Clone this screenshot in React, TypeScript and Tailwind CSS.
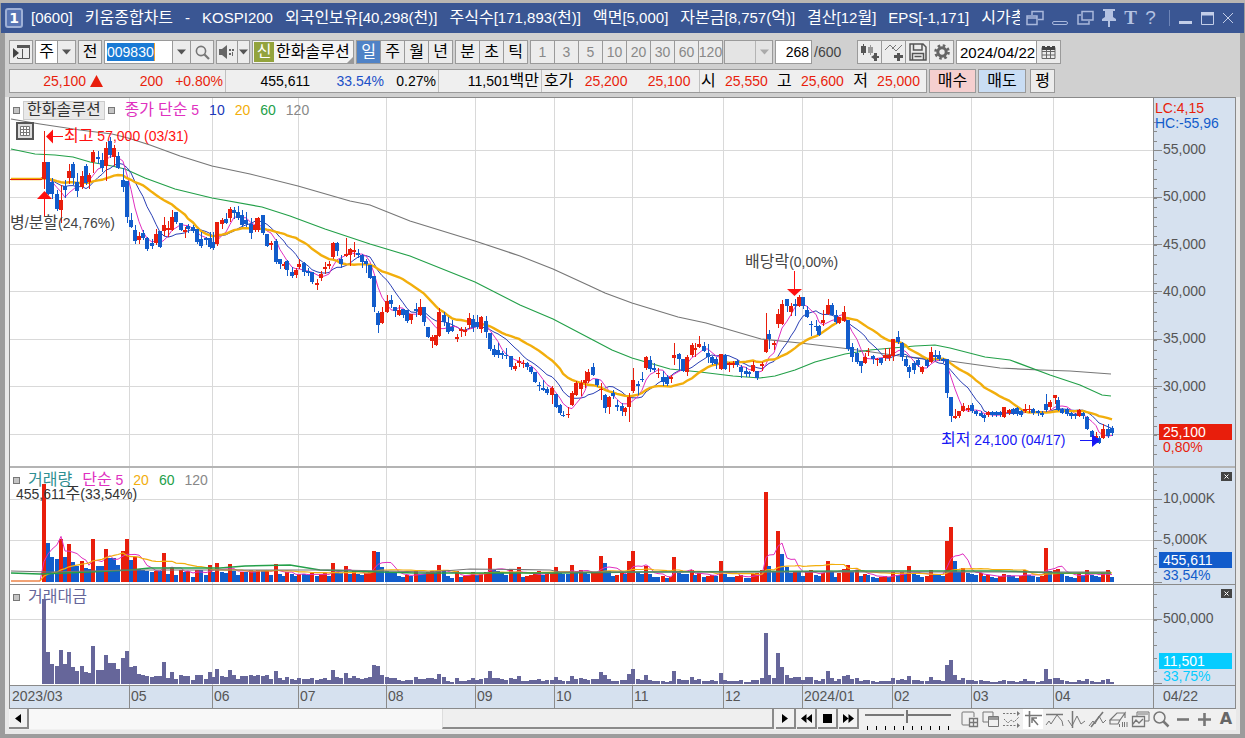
import React from "react";

type Candle = [color: 0 | 1, x: number, high: number, top: number, bottom: number, low: number, volume: number];

const RED = "#e81e0c";
const BLUE = "#125ccb";

/* color (1 = up, 0 = down), x, high, body top, body bottom, low, volume bar height */
const CANDLES: Candle[] = [
  [1, 44, 131, 162, 179, 188, 98], [0, 48, 162, 162, 194, 194, 39], [0, 52, 178, 182, 194, 198, 25], [0, 57, 190, 194, 209, 210, 23],
  [1, 61, 185, 200, 210, 222, 43], [0, 65, 180, 186, 190, 197, 25], [1, 69, 164, 171, 178, 183, 38], [0, 73, 162, 164, 178, 184, 20],
  [0, 77, 173, 182, 191, 196, 16], [1, 82, 171, 176, 187, 188, 21], [0, 86, 164, 166, 183, 184, 14], [1, 89, 173, 175, 182, 188, 13],
  [1, 93, 150, 152, 162, 172, 43], [0, 98, 151, 157, 159, 163, 16], [0, 102, 153, 160, 168, 171, 16], [1, 106, 142, 148, 166, 180, 33],
  [0, 110, 137, 141, 155, 157, 24], [1, 114, 145, 148, 157, 165, 24], [0, 118, 152, 156, 168, 168, 17], [0, 123, 168, 180, 187, 191, 31],
  [0, 127, 181, 181, 217, 222, 43], [0, 131, 213, 220, 227, 227, 22], [0, 135, 225, 230, 241, 243, 25], [1, 139, 232, 236, 240, 243, 13],
  [0, 143, 230, 233, 238, 239, 12], [0, 147, 237, 238, 249, 250, 11], [0, 152, 239, 243, 246, 248, 10], [1, 156, 229, 234, 243, 244, 11],
  [0, 160, 231, 231, 247, 247, 11], [1, 164, 217, 225, 231, 235, 29], [1, 168, 221, 228, 230, 236, 8], [1, 172, 210, 217, 230, 230, 15],
  [0, 176, 212, 212, 222, 223, 7], [0, 181, 223, 223, 230, 230, 12], [1, 185, 227, 230, 232, 237, 10], [0, 188, 224, 226, 229, 232, 11],
  [0, 193, 225, 227, 231, 232, 5], [0, 197, 229, 229, 242, 243, 12], [0, 201, 232, 239, 246, 247, 12], [0, 206, 237, 238, 240, 244, 7],
  [0, 210, 232, 238, 247, 248, 17], [0, 213, 232, 242, 248, 249, 10], [1, 217, 222, 222, 244, 245, 19], [1, 222, 218, 220, 224, 228, 10],
  [0, 226, 213, 219, 223, 223, 9], [1, 230, 207, 209, 218, 221, 18], [0, 234, 207, 210, 213, 218, 11], [0, 238, 206, 212, 218, 219, 7],
  [0, 242, 210, 215, 225, 226, 10], [0, 246, 212, 220, 224, 226, 10], [0, 251, 218, 224, 233, 238, 12], [1, 255, 218, 225, 230, 231, 11],
  [1, 258, 217, 218, 230, 231, 12], [0, 263, 215, 215, 233, 234, 11], [0, 267, 234, 234, 246, 246, 12], [1, 271, 241, 243, 245, 249, 7],
  [0, 276, 239, 241, 262, 263, 18], [0, 280, 259, 259, 264, 268, 8], [1, 284, 262, 264, 266, 268, 6], [0, 287, 260, 261, 270, 275, 10],
  [0, 292, 267, 272, 276, 277, 8], [1, 296, 268, 270, 275, 277, 6], [1, 299, 259, 264, 267, 268, 8], [0, 304, 262, 263, 272, 275, 8],
  [0, 308, 268, 271, 273, 275, 7], [0, 312, 272, 272, 282, 283, 9], [1, 317, 279, 283, 285, 289, 6], [1, 321, 271, 274, 278, 280, 8],
  [1, 325, 262, 267, 269, 273, 9], [1, 329, 261, 264, 266, 268, 6], [1, 333, 242, 243, 257, 258, 19], [0, 337, 242, 243, 251, 255, 10],
  [0, 341, 255, 259, 264, 267, 9], [1, 346, 238, 254, 256, 256, 16], [1, 350, 248, 249, 255, 265, 8], [1, 354, 242, 250, 252, 256, 11],
  [0, 358, 249, 253, 255, 257, 8], [0, 362, 254, 255, 262, 267, 7], [0, 366, 259, 261, 264, 272, 9], [0, 370, 265, 265, 278, 278, 11],
  [0, 374, 276, 276, 307, 311, 31], [0, 378, 311, 313, 325, 332, 30], [1, 382, 307, 312, 323, 323, 15], [1, 387, 295, 301, 312, 312, 11],
  [0, 391, 295, 300, 304, 307, 10], [0, 395, 307, 307, 311, 316, 9], [1, 399, 305, 310, 315, 315, 6], [0, 403, 309, 309, 315, 317, 5],
  [0, 407, 310, 310, 321, 322, 7], [1, 411, 314, 314, 320, 323, 6], [0, 416, 303, 309, 311, 316, 11], [1, 420, 299, 307, 315, 315, 8],
  [0, 424, 307, 307, 322, 325, 8], [0, 428, 327, 327, 337, 337, 10], [1, 432, 335, 337, 341, 347, 11], [1, 436, 335, 335, 345, 345, 9],
  [1, 439, 308, 312, 336, 336, 17], [0, 444, 312, 315, 322, 325, 11], [0, 448, 317, 323, 332, 333, 6], [0, 452, 320, 327, 331, 331, 4],
  [1, 457, 334, 337, 339, 341, 11], [1, 461, 327, 329, 331, 336, 5], [1, 465, 327, 330, 332, 335, 6], [1, 469, 313, 318, 325, 328, 7],
  [0, 473, 315, 319, 327, 331, 10], [0, 477, 315, 322, 327, 328, 7], [1, 481, 316, 317, 329, 332, 8], [0, 486, 316, 321, 332, 337, 10],
  [0, 490, 333, 333, 349, 350, 24], [0, 494, 345, 349, 355, 356, 12], [0, 498, 343, 350, 355, 357, 11], [0, 502, 351, 353, 355, 358, 9],
  [0, 506, 348, 355, 356, 358, 7], [0, 511, 356, 356, 367, 369, 12], [1, 515, 363, 366, 369, 370, 10], [1, 519, 357, 361, 363, 366, 15],
  [1, 523, 360, 363, 364, 367, 5], [0, 527, 362, 363, 367, 369, 6], [0, 531, 366, 367, 372, 373, 7], [0, 535, 372, 372, 382, 382, 9],
  [0, 539, 382, 385, 386, 390, 11], [0, 543, 380, 388, 390, 390, 7], [0, 547, 387, 389, 393, 394, 8], [1, 552, 386, 388, 395, 403, 9],
  [0, 556, 394, 394, 407, 407, 15], [0, 560, 404, 405, 413, 414, 9], [0, 563, 411, 415, 416, 416, 8], [1, 568, 407, 414, 415, 417, 8],
  [1, 572, 391, 393, 405, 405, 17], [1, 576, 381, 383, 395, 395, 10], [1, 581, 380, 383, 389, 395, 12], [1, 585, 371, 380, 383, 387, 10],
  [1, 588, 369, 372, 381, 382, 8], [0, 593, 363, 367, 375, 375, 9], [0, 597, 379, 379, 385, 386, 10], [1, 601, 383, 389, 390, 399, 26],
  [0, 605, 394, 395, 408, 412, 19], [1, 609, 396, 397, 407, 413, 11], [0, 613, 390, 393, 396, 398, 6], [0, 617, 400, 405, 407, 410, 7],
  [0, 622, 403, 406, 411, 415, 10], [1, 625, 407, 408, 412, 415, 8], [1, 629, 393, 397, 407, 421, 21], [1, 633, 368, 380, 391, 392, 31],
  [0, 638, 381, 384, 386, 394, 10], [0, 642, 372, 379, 380, 381, 8], [1, 646, 356, 357, 368, 369, 16], [0, 650, 356, 360, 369, 371, 8],
  [0, 654, 363, 368, 370, 371, 5], [1, 658, 368, 373, 374, 377, 5], [0, 663, 371, 377, 382, 385, 6], [0, 667, 375, 377, 384, 385, 4],
  [1, 671, 375, 377, 379, 382, 5], [1, 674, 343, 355, 358, 364, 25], [0, 679, 353, 354, 359, 369, 9], [0, 683, 359, 359, 371, 371, 8],
  [1, 687, 355, 357, 372, 375, 8], [1, 692, 343, 345, 355, 356, 12], [1, 695, 343, 348, 350, 356, 7], [1, 699, 336, 344, 347, 347, 9],
  [0, 704, 342, 346, 351, 351, 5], [0, 708, 344, 353, 357, 362, 6], [0, 712, 356, 357, 363, 364, 7], [0, 716, 357, 359, 364, 368, 6],
  [1, 721, 354, 354, 369, 369, 21], [0, 725, 354, 355, 369, 369, 8], [1, 729, 362, 363, 365, 371, 5], [1, 733, 361, 363, 365, 367, 5],
  [0, 737, 360, 361, 365, 366, 6], [0, 741, 365, 367, 372, 377, 7], [0, 746, 367, 371, 374, 376, 4], [0, 749, 371, 372, 374, 376, 4],
  [1, 753, 361, 365, 371, 371, 8], [0, 757, 371, 371, 378, 379, 9], [1, 762, 362, 364, 366, 370, 12], [1, 766, 313, 340, 352, 352, 90],
  [0, 769, 330, 334, 339, 348, 16], [1, 774, 341, 343, 345, 349, 10], [1, 778, 309, 314, 324, 327, 51], [1, 782, 300, 304, 324, 324, 28],
  [0, 787, 299, 299, 306, 311, 15], [1, 791, 303, 306, 312, 315, 9], [0, 795, 299, 304, 306, 315, 11], [1, 799, 295, 297, 306, 306, 11],
  [0, 803, 297, 297, 306, 308, 6], [0, 807, 306, 310, 317, 317, 11], [0, 811, 321, 324, 325, 335, 12], [0, 816, 320, 326, 327, 330, 7],
  [0, 819, 325, 326, 335, 335, 6], [1, 823, 310, 320, 323, 325, 9], [1, 828, 299, 305, 314, 314, 21], [0, 832, 303, 305, 315, 315, 10],
  [0, 836, 310, 315, 322, 323, 5], [1, 839, 317, 317, 323, 323, 9], [1, 844, 306, 312, 321, 321, 13], [0, 848, 320, 320, 349, 350, 17],
  [0, 852, 343, 347, 357, 361, 10], [0, 857, 348, 353, 362, 363, 12], [0, 861, 361, 361, 366, 372, 6], [1, 865, 353, 357, 363, 363, 8],
  [1, 868, 348, 351, 352, 355, 7], [0, 873, 355, 356, 359, 363, 5], [1, 877, 358, 359, 360, 365, 4], [0, 881, 358, 358, 363, 364, 5],
  [1, 885, 348, 355, 358, 360, 6], [1, 889, 348, 355, 358, 360, 5], [1, 893, 339, 339, 356, 360, 10], [0, 898, 331, 337, 342, 343, 7],
  [0, 902, 342, 343, 357, 360, 10], [0, 906, 356, 359, 366, 366, 8], [0, 909, 365, 367, 372, 377, 16], [0, 914, 361, 363, 370, 373, 8],
  [0, 918, 359, 360, 365, 366, 7], [1, 922, 366, 367, 372, 373, 5], [0, 927, 359, 360, 366, 367, 6], [1, 931, 347, 352, 362, 362, 12],
  [0, 935, 350, 355, 357, 360, 8], [0, 939, 351, 355, 359, 360, 7], [0, 943, 358, 359, 361, 362, 6], [0, 947, 359, 359, 393, 397, 41],
  [0, 951, 397, 397, 416, 421, 55], [1, 955, 409, 416, 418, 418, 21], [1, 959, 411, 411, 416, 417, 10], [1, 963, 403, 406, 411, 411, 14],
  [1, 968, 405, 408, 410, 411, 9], [0, 972, 403, 405, 411, 412, 8], [0, 976, 410, 411, 414, 415, 7], [0, 981, 411, 413, 416, 416, 9],
  [0, 984, 414, 415, 418, 421, 6], [1, 988, 411, 412, 415, 416, 7], [0, 992, 411, 412, 415, 416, 5], [0, 996, 411, 412, 415, 416, 4],
  [0, 1000, 411, 412, 415, 416, 6], [1, 1004, 407, 407, 417, 417, 8], [1, 1009, 409, 410, 413, 414, 7], [0, 1013, 408, 409, 413, 414, 6],
  [0, 1017, 407, 408, 414, 415, 4], [0, 1021, 410, 411, 415, 416, 6], [1, 1025, 404, 409, 411, 412, 12], [1, 1029, 405, 409, 410, 412, 7],
  [0, 1033, 408, 409, 413, 414, 6], [0, 1038, 410, 411, 413, 415, 5], [0, 1042, 411, 413, 415, 416, 6], [0, 1046, 394, 404, 410, 411, 34],
  [1, 1050, 400, 402, 407, 409, 11], [1, 1055, 395, 395, 398, 403, 12], [0, 1058, 397, 400, 410, 410, 13], [0, 1062, 408, 409, 413, 413, 9],
  [0, 1067, 408, 409, 414, 415, 6], [0, 1071, 412, 413, 416, 418, 5], [0, 1075, 413, 414, 416, 418, 4], [1, 1079, 409, 410, 416, 416, 9],
  [0, 1083, 412, 413, 416, 418, 7], [0, 1087, 416, 417, 429, 429, 12], [0, 1092, 430, 431, 437, 438, 7], [1, 1096, 432, 436, 438, 439, 6],
  [0, 1099, 436, 438, 443, 443, 5], [1, 1103, 424, 429, 438, 438, 9], [0, 1108, 424, 429, 436, 437, 12], [0, 1112, 426, 428, 433, 435, 5],
];

const MA120 = "11,119 40,124 80,130 112,134 128,138 150,145 180,156 212,166 250,174 298,186 350,201 370,205 410,221 475,241 520,256 553,269 590,286 605,293 632,303 678,317 706,323 761,339 800,343 850,349 900,356 950,361 1000,368 1040,370 1070,371 1111,374";
const MA60 = "11,149 35,154 55,155 73,157 90,162 112,166 125,169 145,178 175,189 212,198 262,207 290,216 325,229 370,244 390,250 410,256 475,282 520,305 553,319 593,340 612,350 632,358 670,369 700,372 733,376 760,378 775,376 795,370 815,362 845,354 870,350 915,346 935,345 950,348 985,357 1010,360 1050,375 1080,385 1102,395 1111,396";
const VOLUME_MA60 = "11,573 40,574 90,572 130,570 150,568 220,568 245,566 290,565 320,570 350,571 415,573 560,573 640,572 860,571 950,571 1000,571 1060,573 1111,573";
const VOLUME_MA120 = "11,571 50,572 130,570 340,570 430,572 470,569 550,570 560,572 1111,572";

const FIRST_X = 44;
const LEAD: number[] = [11, 15, 19, 23, 27, 32, 36, 40];

function movingAverage(values: number[], seed: number, period: number): string {
  const padded = [...Array(period + LEAD.length).fill(seed), ...values];
  const xs = [...LEAD, ...CANDLES.map((c) => c[1])];
  return xs
    .map((x, i) => {
      const end = i + period + 1;
      const part = padded.slice(end - period, end);
      return `${x},${(part.reduce((a, b) => a + b, 0) / period).toFixed(1)}`;
    })
    .join(" ");
}

const CLOSES = CANDLES.map((c) => (c[0] ? c[3] : c[4]));
const VOLUME_TOPS = CANDLES.map((c) => 582 - c[6]);
const PRICE_MA = [5, 10, 20].map((n) => movingAverage(CLOSES, 179, n));
const VOLUME_MA = [5, 20].map((n) => movingAverage(VOLUME_TOPS, 581, n));

const MONTHS: [number, string][] = [
  [129, "05"], [212, "06"], [298, "07"], [386, "08"], [475, "09"], [554, "10"],
  [632, "11"], [723, "12"], [802, "2024/01"], [892, "02"], [971, "03"], [1053, "04"],
];

const splitHangul = (s: string) => s.split(/([가-힣]+)/).filter(Boolean);
const isHangul = (s: string) => /^[가-힣]/.test(s);

/* Hangul is set slightly larger than the figures beside it. */
function Txt({ children }: { children: string }) {
  return <>{splitHangul(children).map((p, i) => (isHangul(p) ? <span key={i} className="text-[16px]">{p}</span> : p))}</>;
}

function SvgTxt({ children }: { children: string }) {
  return <>{splitHangul(children).map((p, i) => <tspan key={i} className={isHangul(p) ? "text-[16px]" : "text-[14px]"}>{p}</tspan>)}</>;
}

function Grid({ rows }: { rows: number[] }) {
  return (
    <g fill="#d9d9d9">
      {MONTHS.map(([x]) => (
        <rect key={x} x={x} y="0" width="1" height="800" />
      ))}
      {rows.map((y) => (
        <rect key={y} x="0" y={y} width="3000" height="1" />
      ))}
    </g>
  );
}

function Plot({ top, children }: { top: number; children: React.ReactNode }) {
  return (
    <svg className="absolute inset-0 h-full w-full whitespace-pre">
      <g transform={`translate(-10 ${-top})`}>{children}</g>
    </svg>
  );
}

function Ticks({ minor, major }: { minor: number[]; major: number[] }) {
  return (
    <g fill="#8a8a8a">
      {minor.map((y) => <rect key={y} x="0" y={y} width="3" height="1" />)}
      {major.map((y) => <rect key={y} x="0" y={y} width="8" height="1" />)}
    </g>
  );
}

const range = (from: number, to: number, step: number) => {
  const out: number[] = [];
  for (let v = from; v <= to; v += step) out.push(Math.round(v));
  return out;
};

const PANEL = "flex w-full";
const AREA = "relative min-w-0 flex-1 overflow-hidden bg-white";
const AXIS = "relative w-[82px] shrink-0 border-l border-[#8a8a8a] bg-[#d6e1ef]";
const LEGEND = "absolute left-[3px] top-0 flex h-6 items-center leading-6";

function Bullet() {
  return <span className="h-[7px] w-[7px] border border-[#777] bg-[#c4c4c4]" />;
}

function CloseBox({ label }: { label: string }) {
  return (
    <button aria-label={label} className="absolute right-[3px] top-1 flex h-[9px] w-[11px] items-center justify-center bg-[#444]">
      <svg width="7" height="7" viewBox="0 0 7 7" stroke="#fff"><path d="M1.5 1.5l4 4M5.5 1.5l-4 4" /></svg>
    </button>
  );
}

function PricePanel() {
  return (
    <section className={`${PANEL} h-[370px] border-b-2 border-[#b4b4b4]`}>
      <div className={AREA}>
        <Plot top={98}>
          <Grid rows={[150, 197, 244, 291, 339, 386, 434]} />
          <g fill="none">
            <polyline points={MA120} stroke="#777" strokeWidth="1.2" />
            <polyline points={MA60} stroke="#23a049" strokeWidth="1.2" />
            <polyline points={PRICE_MA[1]} stroke="#2a3fb5" />
            <polyline points={PRICE_MA[0]} stroke="#e030c0" />
            <polyline points={PRICE_MA[2]} stroke="#f2ae0c" strokeWidth="2.4" />
          </g>
          <rect x="10" y="179" width={FIRST_X - 12} height="1" fill={RED} />
          {CANDLES.map(([up, x, high, top, bottom, low]) => (
            <g key={x} fill={up ? RED : BLUE} shapeRendering="crispEdges">
              <rect x={x} y={high} width="1" height={low - high + 1} />
              <rect x={x - 2} y={top} width="4" height={Math.max(1, bottom - top)} />
            </g>
          ))}
          <g fill="#ff1010" stroke="#ff1010">
            <path d="M63 136.500h-12" />
            <path d="M46 136.500l7-7v14z" stroke="none" />
            <path d="M44.500 216v-20" />
            <path d="M37 199h15l-7.500-8z" stroke="none" />
            <path d="M794.500 271v20" />
            <path d="M787 289h15l-7.500 7z" stroke="none" />
          </g>
          <g fill="#1818f5" stroke="#1818f5">
            <path d="M1080 440.500h14" />
            <path d="M1092 434v13l8-6.500z" stroke="none" />
          </g>
          <text x="64" y="141" fill="#ff1010"><SvgTxt>최고 57,000 (03/31)</SvgTxt></text>
          <text x="10" y="228" fill="#444"><SvgTxt>병/분할(24,76%)</SvgTxt></text>
          <text x="745" y="267" fill="#444"><SvgTxt>배당락(0,00%)</SvgTxt></text>
          <text x="941" y="445" fill="#1818f5"><SvgTxt>최저 24,100 (04/17)</SvgTxt></text>
        </Plot>
        <div className={`${LEGEND} gap-2.5`}>
          <div className="flex items-center gap-[3px]">
            <Bullet />
            <span className="flex h-[19px] items-center border border-[#ccc] bg-[#e9e9e9] px-[3px] text-[16px] text-[#333]">한화솔루션</span>
            <Bullet />
          </div>
          <span className="text-[#e030c0]"><Txt>종가 단순 5</Txt></span>
          <span className="text-[#2038b8]">10</span>
          <span className="text-[#f2ae0c]">20</span>
          <span className="text-[#23a049]">60</span>
          <span className="text-[#888]">120</span>
        </div>
        <button aria-label="데이터 표" className="absolute left-1.5 top-6 flex h-[18px] w-[18px] items-center justify-center border-2 border-[#555] bg-[#ddd]">
          <svg width="12" height="12" viewBox="0 0 12 12" fill="#fff" stroke="#777"><path d="M1.500 1.500h9v9h-9zM1.500 4.500h9M1.500 7.500h9M4.500 1.500v9M7.500 1.500v9" /></svg>
        </button>
      </div>
      <div className={AXIS}>
        <svg className="h-full w-full">
          <g transform="translate(0 -98)">
            <Ticks minor={range(121.500, 462, 9.500)} major={[150, 197, 244, 291, 339, 386, 434]} />
            <g fill="#555">
              {["55,000", "50,000", "45,000", "40,000", "35,000", "30,000"].map((t, i) => (
                <text key={t} x="9" y={Math.round(154 + i * 47.300)}>{t}</text>
              ))}
              <text x="1" y="113" fill={RED}>LC:4,15</text>
              <text x="1" y="128" fill={BLUE}>HC:-55,96</text>
              <rect x="5" y="424" width="73" height="16" fill={RED} />
              <text x="9" y="437" fill="#fff">25,100</text>
              <text x="9" y="452" fill={RED}>0,80%</text>
            </g>
          </g>
        </svg>
      </div>
    </section>
  );
}

function VolumePanel() {
  return (
    <section className={`${PANEL} h-[117px] border-b border-[#8a8a8a]`}>
      <div className={AREA}>
        <Plot top={468}>
          <Grid rows={[499, 540]} />
          {CANDLES.map(([, x, , , , , v], i) => (
            <rect key={x} x={x - 2} y={582 - v} width="4" height={v} fill={i === 0 || v > CANDLES[i - 1][6] ? RED : BLUE} shapeRendering="crispEdges" />
          ))}
          <g fill="none">
            <polyline points={VOLUME_MA[0]} stroke="#e030c0" />
            <polyline points={VOLUME_MA[1]} stroke="#f2ae0c" strokeWidth="1.2" />
            <polyline points={VOLUME_MA60} stroke="#23a049" strokeWidth="1.5" />
            <polyline points={VOLUME_MA120} stroke="#777" strokeWidth="1.2" />
          </g>
          <text x="16" y="499" fill="#333"><SvgTxt>455,611주(33,54%)</SvgTxt></text>
        </Plot>
        <div className={`${LEGEND} gap-2.5`}>
          <div className="flex items-center gap-2">
            <Bullet />
            <span className="text-[16px] text-[#2f8f93]">거래량</span>
          </div>
          <span className="text-[#e030c0]"><Txt>단순 5</Txt></span>
          <span className="text-[#f2ae0c]">20</span>
          <span className="text-[#23a049]">60</span>
          <span className="text-[#888]">120</span>
        </div>
      </div>
      <div className={AXIS}>
        <svg className="h-full w-full">
          <g transform="translate(0 -468)">
            <Ticks minor={range(474, 580, 8.200)} major={[499, 540, 582]} />
            <g fill="#555">
              <text x="9" y="503">10,000K</text>
              <text x="9" y="544">5,000K</text>
              <rect x="5" y="552" width="73" height="16" fill={BLUE} />
              <text x="9" y="565" fill="#fff">455,611</text>
              <text x="9" y="580" fill={BLUE}>33,54%</text>
            </g>
          </g>
        </svg>
        <CloseBox label="거래량 닫기" />
      </div>
    </section>
  );
}

function TurnoverPanel() {
  return (
    <section className={`${PANEL} h-[101px] border-b border-[#8a8a8a]`}>
      <div className={AREA}>
        <Plot top={585}>
          <Grid rows={[619]} />
          {CANDLES.map(([, x, , , , , v], i) => {
            const price = 25000 + ((434 - CLOSES[i]) / 47.300) * 5000;
            const h = Math.max(2, Math.round((v * price) / 62000));
            return <rect key={x} x={x - 2} y={684 - h} width="4" height={h} fill="#66669a" shapeRendering="crispEdges" />;
          })}
        </Plot>
        <div className={`${LEGEND} gap-2`}>
          <Bullet />
          <span className="text-[16px] text-[#66669a]">거래대금</span>
        </div>
      </div>
      <div className={AXIS}>
        <svg className="h-full w-full">
          <g transform="translate(0 -585)">
            <Ticks minor={range(594, 680, 12.800)} major={[619, 683]} />
            <g fill="#555">
              <text x="9" y="623">500,000</text>
              <rect x="5" y="653" width="73" height="16" fill="#06ccff" />
              <text x="9" y="666" fill="#fff">11,501</text>
              <text x="9" y="681" fill="#06ccff">33,75%</text>
            </g>
          </g>
        </svg>
        <CloseBox label="거래대금 닫기" />
      </div>
    </section>
  );
}

function DateAxis() {
  return (
    <section className={`${PANEL} h-[23px] border-b border-[#8a8a8a]`}>
      <div className="relative min-w-0 flex-1 overflow-hidden bg-[#d6e1ef]">
        <svg className="absolute inset-0 h-full w-full" fill="#555">
          <text x="2" y="15">2023/03</text>
          {MONTHS.map(([x, label]) => (
            <g key={x}>
              <rect x={x - 10} y="0" width="1" height="23" fill="#8a8a8a" />
              <text x={x - 8} y="15">{label}</text>
            </g>
          ))}
        </svg>
      </div>
      <div className={`${AXIS} pl-[9px] leading-5 text-[#555]`}>04/22</div>
    </section>
  );
}

const BTN = "flex h-6 items-center justify-center border border-[#9a9a9a] bg-[#ececec] leading-[22px] text-black";

function Arrow({ color = "#555" }: { color?: string }) {
  return <svg width="9" height="6" viewBox="0 0 9 6" fill={color}><path d="M0 .5h9l-4.500 5z" /></svg>;
}

function ButtonGroup({ items, active, muted }: { items: string[]; active?: string; muted?: boolean }) {
  return (
    <div className="flex">
      {items.map((t, i) => (
        <button
          key={t}
          className={`${BTN} w-[25px] ${i < items.length - 1 || muted ? "-mr-px" : ""} ${t === active ? "!bg-[#4f82c6] !text-white" : ""} ${muted ? "!text-[#888]" : ""}`}
        >
          <Txt>{t}</Txt>
        </button>
      ))}
    </div>
  );
}

function Toolbar() {
  return (
    <div className="flex items-center gap-0.5 whitespace-nowrap">
      <button aria-label="패널" className={`${BTN} w-6`}>
        <svg width="17" height="16" viewBox="0 0 17 16" fill="none" stroke="#555"><path d="M4.500 3v-1.500h12v13h-12V13M9.500 5v9" /><path d="M4 1h13v3H4z" fill="#555" stroke="none" /><path d="M0 4l6 5-6 5z" fill="#444" stroke="none" /></svg>
      </button>
      <div className="flex">
        <button className={`${BTN} -mr-px w-[23px] !bg-white`}><Txt>주</Txt></button>
        <button aria-label="종목 종류" className={`${BTN} w-[19px]`}><Arrow /></button>
      </div>
      <button className={`${BTN} w-6`}><Txt>전</Txt></button>
      <div className="flex">
        <div className="-mr-px flex h-6 w-[69px] items-center border border-[#9a9a9a] bg-white pl-0.5">
          <input aria-label="종목코드" defaultValue="009830" className="h-[18px] w-[48px] border-r border-[#f0a030] bg-[#1a7ad4] text-white outline-none" />
        </div>
        <button aria-label="종목 목록" className={`${BTN} -mr-px w-[19px]`}><Arrow /></button>
        <button aria-label="검색" className={`${BTN} w-6`}>
          <svg width="15" height="15" viewBox="0 0 15 15" fill="none" stroke="#777" strokeWidth="1.600"><circle cx="6" cy="6" r="4.600" /><path d="M9.500 9.500l4.500 4.500" strokeWidth="2.200" /></svg>
        </button>
      </div>
      <div className="flex">
        <button aria-label="소리" className={`${BTN} -mr-px w-[22px]`}>
          <svg width="16" height="14" viewBox="0 0 16 14" fill="#666"><path d="M0 4h3l5-4v14l-5-4H0zM10 4h2v2h-2zM13 4h2v2h-2zM10 8h2v2h-2zM13 7h1v4h-1z" /></svg>
        </button>
        <button aria-label="소리 설정" className={`${BTN} w-[13px]`}><Arrow /></button>
      </div>
      <div className="relative flex h-6 w-[102px] items-center border border-[#9a9a9a] bg-[#f4f4f4] pl-px text-[16px] leading-[22px]">
        <span className="flex h-5 w-5 shrink-0 items-center justify-center bg-[#93a33c] text-white">신</span>
        <span className="ml-0.5 text-black">한화솔루션</span>
        <svg className="absolute bottom-0 right-0" width="6" height="6" fill="#999"><path d="M6 0v6H0z" /></svg>
      </div>
      <ButtonGroup items={["일", "주", "월", "년"]} active="일" />
      <ButtonGroup items={["분", "초", "틱"]} />
      <ButtonGroup items={["1", "3", "5", "10", "20", "30", "60", "120"]} muted />
      <button aria-label="분 간격" className={`${BTN} w-[49px] !justify-end !bg-[#e4e4e4]`}>
        <span className="flex h-full w-[17px] items-center justify-center border-l border-[#b4b4b4]"><Arrow color="#aaa" /></span>
      </button>
      <input aria-label="봉 개수" defaultValue="268" className="h-6 w-[37px] border border-[#9a9a9a] bg-white pr-0.5 text-right text-black outline-none" />
      <span className="w-[41px] text-[#444]">/600</span>
      <div className="flex">
        <button aria-label="캔들 추가" className={`${BTN} -mr-px w-[25px]`}>
          <svg width="20" height="18" viewBox="0 0 20 18" fill="#555"><path d="M1 3h5v7H1zM3 1h1v11H3z" /><path d="M8 4h5v6H8zM10 2h1v10h-1z" fill="#999" /><path d="M14 10h3v3h2v2h-2v3h-3v-2l-3-2 3-2z" /></svg>
        </button>
        <button aria-label="지표 추가" className={`${BTN} -mr-px w-[25px]`}>
          <svg width="20" height="18" viewBox="0 0 20 18"><path d="M1 7l5-5 6 6 6-6M12 2l-4 4" fill="none" stroke="#777" /><path d="M13 10h3v2h3v3h-3v3h-3v-3h-3v-3h3z" fill="#555" /></svg>
        </button>
        <button aria-label="저장" className={`${BTN} -mr-px w-[25px]`}>
          <svg width="18" height="18" viewBox="0 0 18 18" fill="none" stroke="#555" strokeWidth="1.500"><path d="M1 1h13l3 3v13H1zM4.500 1v6h8.500V1M3.500 17v-6.500h11V17M5.500 13.500h7" /></svg>
        </button>
        <button aria-label="설정" className={`${BTN} w-[25px]`}>
          <svg width="16" height="16" viewBox="0 0 16 16" fill="none" stroke="#666"><circle cx="8" cy="8" r="4.200" strokeWidth="3" /><circle cx="8" cy="8" r="6.500" strokeWidth="2.600" strokeDasharray="2.550 2.550" /></svg>
        </button>
      </div>
      <div className="flex">
        <input aria-label="날짜" defaultValue="2024/04/22" className="-mr-px h-6 w-[81px] border border-[#9a9a9a] bg-white pl-[3px] text-[15px] text-black outline-none" />
        <button aria-label="달력" className={`${BTN} w-[25px]`}>
          <svg width="15" height="14" viewBox="0 0 15 14" fill="none" stroke="#666"><path d="M1 2.500h13v11H1zM1 6.500h13M1 10h13M5.500 4v9M9.500 4v9" /><path d="M1 1h3v1h2V1h3v1h2V1h3v4H1z" fill="#444" stroke="none" /></svg>
        </button>
      </div>
    </div>
  );
}

function QuoteBar() {
  return (
    <div className="flex items-center gap-0.5 whitespace-nowrap">
      <div className="flex h-6 w-[918px] items-stretch border border-[#9a9a9a] bg-[#efefef] leading-[22px] text-black [&>div]:flex [&>div]:items-center [&>div+div]:border-l [&>div+div]:border-[#c0c0c0]">
        <div className="w-[215px] justify-end pr-0.5 text-[#e81e0c]">
          <span>25,100</span>
          <svg className="ml-1" width="13" height="12" viewBox="0 0 13 12" fill={RED}><path d="M6.500 0L13 12H0z" /></svg>
          <span className="w-[60px] text-right">200</span>
          <span className="w-[60px] text-right">+0.80%</span>
        </div>
        <div className="w-[213px] justify-end pr-0.5">
          <span>455,611</span>
          <span className="w-[74px] text-right text-[#1c50c8]">33.54%</span>
          <span className="w-[52px] text-right">0.27%</span>
        </div>
        <div className="w-[103px] justify-end pr-0.5"><span><Txt>11,501백만</Txt></span></div>
        <div className="w-[158px] pl-0.5 text-[#e81e0c]">
          <span className="text-[16px] text-black">호가</span>
          <span className="w-[54px] text-right">25,200</span>
          <span className="w-[63px] text-right">25,100</span>
        </div>
        <div className="flex-1 justify-between pl-px pr-1.5 text-[#e81e0c]">
          <span className="text-[16px] text-black">시</span><span>25,550</span>
          <span className="text-[16px] text-black">고</span><span>25,600</span>
          <span className="text-[16px] text-black">저</span><span>25,000</span>
        </div>
      </div>
      <button className={`${BTN} w-[47px] !bg-[#f5cfcf]`}><Txt>매수</Txt></button>
      <button className={`${BTN} w-[48px] !bg-[#c9ddf4]`}><Txt>매도</Txt></button>
      <button className={`${BTN} ml-0.5 w-[25px]`}><Txt>평</Txt></button>
    </div>
  );
}

const TITLE = [
  "[0600]", "키움종합차트", "-", "KOSPI200", "외국인보유[40,298(천)]", "주식수[171,893(천)]", "액면[5,000]",
  "자본금[8,757(억)]", "결산[12월]", "EPS[-1,171]", "시가총액",
];

function TitleBar() {
  return (
    <header className="mx-px flex h-[30px] items-center bg-[#3a5693] pl-1 pr-[7px] text-white">
      <span className="flex h-5 w-[18px] shrink-0 items-center justify-center rounded-[3px] border-2 border-[#9fb0d6] bg-[#5a76b4] font-['DejaVu_Sans'] font-bold">1</span>
      <h1 className="ml-2 flex min-w-0 flex-1 items-baseline gap-3 overflow-hidden whitespace-nowrap text-[15px] leading-7">
        {TITLE.map((t) => <span key={t}><Txt>{t}</Txt></span>)}
      </h1>
      <div className="ml-1 flex shrink-0 items-center [&>button]:flex [&>button]:h-6 [&>button]:items-center [&>button]:justify-center">
        <button aria-label="창 분리" className="w-[22px]"><svg width="18" height="16" viewBox="0 0 18 16" fill="none" stroke="#a9b8dc" strokeWidth="1.500"><path d="M6 5V1.500h11v8h-5M1 6h10v8.500H1zM1 8h10" /></svg></button>
        <button aria-label="접기" className="w-7"><svg width="16" height="16" viewBox="0 0 16 16" fill="none" stroke="#a9b8dc"><rect x=".5" y="11.500" width="15" height="3" rx="1.500" /></svg></button>
        <button aria-label="복제" className="w-[22px]"><svg width="17" height="16" viewBox="0 0 17 16" fill="none" stroke="#a9b8dc" strokeWidth="1.500"><path d="M5 1.500h11v8.500H5zM4 5H1v9h11v-3" /></svg></button>
        <button aria-label="고정" className="w-[25px]"><svg width="14" height="18" viewBox="0 0 14 18" fill="#b4c2e2"><path d="M1 0h12v2h-2v6l3 2v2H8v6H6v-6H0v-2l3-2V2H1z" /></svg></button>
        <button aria-label="글꼴" className="w-[19px] font-['Liberation_Serif'] text-[19px] font-bold text-[#b4c2e2]">T</button>
        <button aria-label="도움말" className="w-[21px] text-[19px] text-[#b4c2e2]">?</button>
        <span className="ml-2 mr-1 h-4 w-px bg-[#6f86b8]" />
        <button aria-label="최소화" className="w-[22px]"><svg width="13" height="14" fill="#c3cee8"><path d="M0 10h13v3H0z" /></svg></button>
        <button aria-label="최대화" className="w-[23px]"><svg width="13" height="13" viewBox="0 0 13 13" fill="none" stroke="#c3cee8"><path d="M.5 .5h12v12H.5z" /><path d="M0 0h13v3.500H0z" fill="#c3cee8" stroke="none" /></svg></button>
        <button aria-label="닫기" className="w-[18px]"><svg width="12" height="12" viewBox="0 0 12 12" fill="none" stroke="#c3cee8"><path d="M1 1l10 10M11 1L1 11" /></svg></button>
      </div>
    </header>
  );
}

const RAISED = "flex h-5 w-5 shrink-0 items-center justify-center border-b-2 border-r-2 border-[#8a8a8a] bg-[#f2f2f2]";

const TOOLS: { label: string; icon: React.ReactNode; active?: boolean }[] = [
  { label: "차트 추가", icon: <><path d="M9 15H3a1 1 0 0 1-1-1V3a1 1 0 0 1 1-1h10a1 1 0 0 1 1 1v4" /><path d="M9.500 8.500h8v8h-8zM13.500 8.500v8M9.500 12.500h8" strokeWidth="1.300" /></> },
  { label: "차트 겹침", icon: <><path d="M7 12H2V2h10v4" /><path d="M7.500 6.500h10v10h-10z" /><path d="M8 7h9v3H8z" fill="#999" stroke="none" /></> },
  { label: "영역 표시", icon: <><path d="M1 3.500h16M1 15.500h16" strokeDasharray="2 1.500" /><path d="M2 9l4 4 3-3 3 2 5-5" strokeDasharray="2 1" /><path d="M15 1l3 2.500-3 2.500zM15 13l3 2.500-3 2.500z" fill="#777" stroke="none" /></> },
  { label: "십자선", active: true, icon: <><path d="M1 5.500h17M5.500 1v16" strokeWidth="1.600" /><path d="M8 8l6 7M8 13V8h5" strokeWidth="1.500" /></> },
  { label: "수평선", icon: <><path d="M1 4.500h17" strokeWidth="1.500" /><path d="M1 15l3-4 2 3 6-9 5 6 1 5" /></> },
  { label: "수직선", icon: <><path d="M5.500 1v17" strokeWidth="1.500" /><path d="M1 10l4 6 5-10 4 8 4-3" /></> },
  { label: "추세선", icon: <><path d="M3 17L15 2" strokeWidth="1.600" /><path d="M1 16l4-5 2 3 4-8 4 7 3-3" /></> },
  { label: "전체 삭제", icon: <><path d="M1 10l7-7h8l-5 7zM1 10v4h8l2-4M11 10l5-7v5" strokeWidth="1.200" /><path d="M10.500 17v-3M13.500 17v-5M15.500 17v-5M18 17v-5" /></> },
  { label: "차트 저장", icon: <><path d="M6 6V2h12v9h-4M7 4h10" /><path d="M1.500 6.500h12v10h-12zM2 14l3-4 3 3 4-4" strokeWidth="1.300" /></> },
  { label: "돋보기", icon: <><circle cx="7.500" cy="7.500" r="5.500" strokeWidth="1.500" /><path d="M11.500 11.500l5 5" strokeWidth="2.500" /></> },
  { label: "축소", icon: <path d="M3 9.500h12" strokeWidth="2.600" /> },
  { label: "확대", icon: <path d="M3 9.500h13M9.500 3v13" strokeWidth="2.600" /> },
];

function BottomBar() {
  return (
    <footer className="flex h-[21px] w-full items-start bg-[#f0f0f0]">
      <button aria-label="왼쪽으로" className={RAISED}><svg width="6" height="9"><path d="M6 0v9L0 4.500z" /></svg></button>
      <div className="flex h-5 min-w-0 flex-1 justify-end bg-[#f8f8f8]">
        <div className="h-5 w-[332px] border-b-2 border-l border-r-2 border-[#8a8a8a] border-l-[#ddd] bg-[#efefef]" />
      </div>
      <div className="ml-0.5 flex gap-px">
        <button aria-label="오른쪽으로" className={RAISED}><svg width="6" height="9"><path d="M0 0v9l6-4.500z" /></svg></button>
        <button aria-label="되감기" className={RAISED}><svg width="11" height="9"><path d="M5.500 0v9L0 4.500zM11 0v9L5.500 4.500z" /></svg></button>
        <button aria-label="정지" className={RAISED}><svg width="9" height="9"><path d="M0 0h9v9H0z" /></svg></button>
        <button aria-label="빨리 감기" className={RAISED}><svg width="11" height="9"><path d="M0 0v9l5.500-4.500zM5.500 0v9L11 4.500z" /></svg></button>
      </div>
      <div className="ml-1.5 w-[86px] shrink-0">
        <input
          type="range"
          aria-label="재생 속도"
          defaultValue={47}
          className="block h-[15px] w-full appearance-none bg-transparent bg-[linear-gradient(#777,#777)] bg-[length:100%_2px] bg-[position:0_5px] bg-no-repeat [&::-webkit-slider-thumb]:h-[13px] [&::-webkit-slider-thumb]:w-1 [&::-webkit-slider-thumb]:appearance-none [&::-webkit-slider-thumb]:border-r-2 [&::-webkit-slider-thumb]:border-[#777] [&::-webkit-slider-thumb]:bg-[#eee]"
        />
        <div className="mt-0.5 flex h-1 justify-between px-0.5">
          {range(0, 9, 1).map((n) => <span key={n} className="w-px bg-black" />)}
        </div>
      </div>
      <div className="ml-2 flex w-[277px] shrink-0 justify-between">
        {TOOLS.map((t) => (
          <button key={t.label} aria-label={t.label} className={`flex h-5 w-5 items-center justify-center ${t.active ? "bg-white" : ""}`}>
            <svg width="19" height="19" viewBox="0 0 19 19" fill="none" stroke="#777">{t.icon}</svg>
          </button>
        ))}
        <button aria-label="자동" className="flex h-5 w-5 items-center justify-center font-['DejaVu_Sans'] text-[16px] font-bold text-[#666]">A</button>
      </div>
    </footer>
  );
}

export default function App() {
  return (
    <div className="w-full bg-[#9c9c9c] font-['Liberation_Sans','Noto_Sans_CJK_KR',sans-serif] text-[14px]">
      <div className="h-[3px] bg-[#b9b6b2]" />
      <TitleBar />
      <div className="mx-[5px] bg-[#d0d0d0]">
        <div className="flex flex-col gap-[5px] px-1 pt-[7px]">
          <Toolbar />
          <QuoteBar />
        </div>
        <div className="mt-1 border-x-4 border-b-4 border-[#e8e8e8]">
          <div className="border-l border-r border-t border-[#8a8a8a]">
            <PricePanel />
            <VolumePanel />
            <TurnoverPanel />
            <DateAxis />
          </div>
          <BottomBar />
        </div>
      </div>
      <div className="h-1" />
    </div>
  );
}
